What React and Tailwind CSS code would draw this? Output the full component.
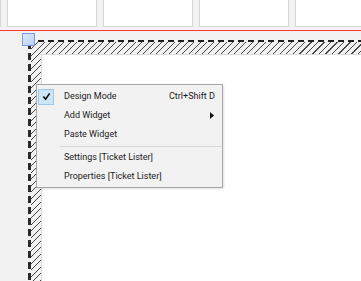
import React from 'react';

// Designer canvas with a selected widget and its context menu open.

const MENU = [
  { label: 'Design Mode', checked: true, shortcut: 'Ctrl+Shift D' },
  { label: 'Add Widget', submenu: true },
  { label: 'Paste Widget' },
  { sep: true },
  { label: 'Settings [Ticket Lister]' },
  { label: 'Properties [Ticket Lister]' },
];

const ContextMenu = () => (
  <div className="absolute left-[36px] top-[84px] w-[187px] pt-[2px] pb-px bg-[#f2f2f2] border border-[#a6a6a6] shadow-[1px_1px_2px_rgba(0,0,0,0.12)] text-[9px] text-[#1a1a1a] font-['Roboto',sans-serif]">
    {MENU.map((item, i) =>
      item.sep ? (
        <div key={i} className="h-[4px] flex items-center pl-[23px] pr-px">
          <div className="h-px w-full bg-[#d7d7d7]" />
        </div>
      ) : (
        <div key={i} className="h-[19px] flex items-center relative">
          <div className="w-[27px] h-full flex items-center pl-px">
            {item.checked && (
              <div className="w-[16px] h-[16px] flex items-center justify-center bg-[#cfe6f6] border border-[#9cc9ec]">
                <svg width="9" height="9" viewBox="0 0 10 10">
                  <polyline points="1.5,5 4,8 8.5,1.5" fill="none" stroke="#111" strokeWidth="1.8" />
                </svg>
              </div>
            )}
          </div>
          <span className="flex-1 whitespace-nowrap">{item.label}</span>
          {item.shortcut && <span className="absolute left-[132px] whitespace-nowrap">{item.shortcut}</span>}
          {item.submenu && (
            <svg className="absolute left-[173px]" width="4" height="7" viewBox="0 0 4 7">
              <polygon points="0,0 4,3.5 0,7" fill="#111" />
            </svg>
          )}
        </div>
      )
    )}
  </div>
);

export default function App() {
  return (
    <div className="relative w-[361px] h-[281px] overflow-hidden bg-[#f2f2f2] flex flex-col">
      {/* toolbar tiles, cut off at the top */}
      <div className="flex gap-[6px] -ml-[89px] h-[27px] shrink-0">
        {[0, 1, 2, 3, 4].map((n) => (
          <div key={n} className="w-[90px] shrink-0 bg-white border-x border-b border-[#d6d6d6]" />
        ))}
      </div>
      <div className="mt-[3px] h-px bg-[#ff3434] shrink-0" />

      {/* selected widget with hatched adorner */}
      <div className="relative mt-[9px] ml-[28px] flex-1 flex flex-col">
        <div className="h-[2px] shrink-0 bg-[repeating-linear-gradient(90deg,#1e1e1e_0_6px,#f2f2f2_6px_10px)]" />
        <div className="flex-1 flex">
          <div className="w-[3px] shrink-0 bg-[repeating-linear-gradient(180deg,#2a2a2a_0_7px,#f2f2f2_7px_11px)]" />
          <div className="flex-1 pl-[10px] pt-[12px] bg-[repeating-linear-gradient(135deg,#444_0_0.9px,#f2f2f2_0.9px_4.6px)]">
            <div className="w-full h-full bg-white border-t border-l border-[#dadada]" />
          </div>
        </div>
        <div className="absolute -left-[6px] -top-[7px] w-[13px] h-[13px] bg-[linear-gradient(135deg,#dbe8fb,#bcd3f5)] border border-[#7d9ae2]" />
      </div>

      <ContextMenu />
    </div>
  );
}
